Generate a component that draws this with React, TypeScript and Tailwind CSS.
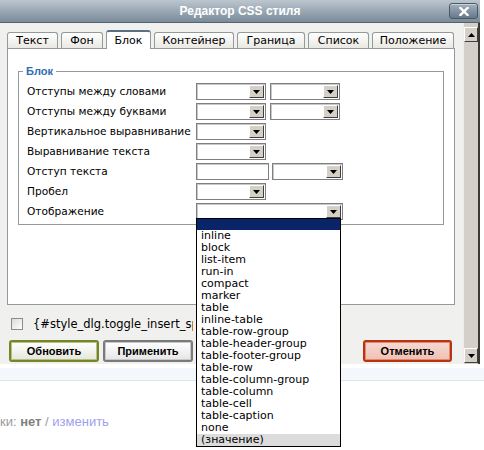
import React from "react";

function DropBtn() {
  return (
    <div className="w-[15px] h-[13px] bg-[#d4d0c8] border border-t-white border-l-white border-b-[#404040] border-r-[#404040] flex items-center justify-center">
      <svg width="7" height="4" viewBox="0 0 7 4"><path d="M0 0h7L3.5 4z" fill="#000" /></svg>
    </div>
  );
}

function Sel({ cls }: { cls: string }) {
  return (
    <div className={cls + " h-[17px] border border-[#7f7f7f] bg-white flex justify-end items-center pr-[1px] shadow-[inset_1px_1px_0_#c8c8c8]"}>
      <DropBtn />
    </div>
  );
}

function Row({ label, children }: { label: string; children?: React.ReactNode }) {
  return (
    <div className="h-[17px] flex items-center">
      <div className="w-[169px] leading-[17px] whitespace-nowrap text-[10.6px]">{label}</div>
      {children}
    </div>
  );
}

const tabs: { t: string; w: string; active?: boolean }[] = [
  { t: "Текст", w: "w-[51px]" },
  { t: "Фон", w: "w-[42px]" },
  { t: "Блок", w: "w-[45px]", active: true },
  { t: "Контейнер", w: "w-[80px]" },
  { t: "Граница", w: "w-[68px]" },
  { t: "Список", w: "w-[61px]" },
  { t: "Положение", w: "w-[82px]" },
];

const items = [
  "inline",
  "block",
  "list-item",
  "run-in",
  "compact",
  "marker",
  "table",
  "inline-table",
  "table-row-group",
  "table-header-group",
  "table-footer-group",
  "table-row",
  "table-column-group",
  "table-column",
  "table-cell",
  "table-caption",
  "none",
];

function Arrow({ up }: { up?: boolean }) {
  return (
    <div className="w-[14px] h-[15px] bg-[#d4d0c8] border border-t-white border-l-white border-b-[#404040] border-r-[#404040] flex items-center justify-center">
      <svg width="7" height="4" viewBox="0 0 7 4">
        <path d={up ? "M0 4h7L3.5 0z" : "M0 0h7L3.5 4z"} fill="#000" />
      </svg>
    </div>
  );
}

export default function App() {
  return (
    <div className="relative w-[484px] h-[450px] overflow-hidden bg-white font-['DejaVu_Sans',sans-serif] text-[11px] text-black">
      {/* dialog */}
      <div className="w-[480px] h-[364px] flex flex-col">
        <div className="h-[23px] flex items-center pl-[31px] bg-linear-to-b from-[#bcc6cf] to-[#7a8b99] border-b border-[#56636e]">
          <div className="flex-1 text-center text-white font-bold text-[12px] font-['Liberation_Sans',sans-serif]">
            Редактор CSS стиля
          </div>
          <div className="w-[29px] h-[16px] mr-[2px] rounded-[3px] border border-[#4b5966] bg-linear-to-b from-[#a4b1bc] to-[#66788a] flex items-center justify-center shadow-[inset_0_1px_0_#c8d2da]">
            <svg width="10" height="9" viewBox="0 0 10 9">
              <path d="M1.5 1l7 7M8.5 1l-7 7" stroke="#fff" strokeWidth="2.4" strokeLinecap="square" />
            </svg>
          </div>
        </div>
        <div className="flex flex-1">
          {/* main */}
          <div className="w-[463px] bg-[#f0f0ee] pl-[7px] pt-[9px] flex flex-col">
            <div className="h-[16px] flex items-end gap-[3px] relative z-10">
              {tabs.map((tb) =>
                tb.active ? (
                  <div
                    key={tb.t}
                    className={tb.w + " h-[19px] -mb-px bg-white border border-[#919b9c] border-b-0 border-t-2 border-t-[#5e6f80] rounded-t-[3px] flex items-center justify-center pt-[1px]"}
                  >
                    {tb.t}
                  </div>
                ) : (
                  <div
                    key={tb.t}
                    className={tb.w + " h-[16px] bg-linear-to-b from-white to-[#e9e8e2] border border-[#919b9c] border-b-0 rounded-t-[3px] flex items-center justify-center pt-[1px]"}
                  >
                    {tb.t}
                  </div>
                )
              )}
            </div>
            <div className="w-[448px] h-[257px] border border-[#919b9c] bg-white">
              <fieldset className="mx-[10px] mt-[15px] border border-[#919b9c] pl-[8px] pt-[5px] pb-[4px]">
                <legend className="ml-[-4px] px-[3px] leading-[14px] font-bold text-[#2e6db4] text-[11px] font-['Liberation_Sans',sans-serif]">
                  Блок
                </legend>
                <div className="flex flex-col gap-[3px]">
                  <Row label="Отступы между словами">
                    <Sel cls="w-[70px]" />
                    <Sel cls="w-[70px] ml-[4px]" />
                  </Row>
                  <Row label="Отступы между буквами">
                    <Sel cls="w-[70px]" />
                    <Sel cls="w-[70px] ml-[4px]" />
                  </Row>
                  <Row label="Вертикальное выравнивание">
                    <Sel cls="w-[70px]" />
                  </Row>
                  <Row label="Выравнивание текста">
                    <Sel cls="w-[70px]" />
                  </Row>
                  <Row label="Отступ текста">
                    <div className="w-[73px] h-[17px] border border-[#7f7f7f] bg-white shadow-[inset_1px_1px_0_#c8c8c8]" />
                    <Sel cls="w-[71px] ml-[3px]" />
                  </Row>
                  <Row label="Пробел">
                    <Sel cls="w-[70px]" />
                  </Row>
                  <Row label="Отображение">
                    <Sel cls="w-[147px]" />
                  </Row>
                </div>
              </fieldset>
            </div>
            <div className="mt-[13px] h-[12px] flex items-center">
              <div className="ml-[4px] w-[12px] h-[12px] border border-[#8c8c8c] bg-linear-to-br from-[#dcdcd6] to-white" />
              <div className="ml-[10px] w-[160px] overflow-hidden text-[11.5px] leading-[14px] whitespace-nowrap">{"{#style_dlg.toggle_insert_span}"}</div>
            </div>
            <div className="mt-[10px] flex mr-[11px]">
              <button className="ml-[2px] w-[90px] h-[22px] rounded-[3px] border-2 border-[#75852a] bg-linear-to-b from-white to-[#e6e6de] shadow-[inset_0_0_0_1px_#b8c080] font-bold text-[11px] font-['Liberation_Sans',sans-serif]">
                Обновить
              </button>
              <button className="ml-[4px] w-[90px] h-[22px] rounded-[3px] border-2 border-[#7a7a7a] bg-linear-to-b from-white to-[#e6e6e6] shadow-[inset_0_0_0_1px_#c8c8c8] font-bold text-[11px] font-['Liberation_Sans',sans-serif]">
                Применить
              </button>
              <button className="ml-auto w-[89px] h-[22px] rounded-[3px] border-2 border-[#b8330f] bg-linear-to-b from-[#f6d9d2] to-[#efc0b5] shadow-[inset_0_0_0_1px_#e08a70] font-bold text-[11px] font-['Liberation_Sans',sans-serif]">
                Отменить
              </button>
            </div>
          </div>
          {/* scrollbar */}
          <div className="w-[17px] bg-[#eeede9] flex">
            <div className="ml-[1px] w-[14px] bg-[#d4d0c8] flex flex-col justify-between pt-[4px] pb-[1px]">
              <Arrow up />
              <Arrow />
            </div>
            <div className="w-[2px] bg-[#3e3834]" />
          </div>
        </div>
      </div>
      {/* page below */}
      <div className="mt-[4px] h-[13px] bg-[#f4f7fc] border-b border-[#dde6ef]" />
      <div className="mt-[33px] leading-[16px] text-[13px] font-['Liberation_Sans',sans-serif] text-[#9a9a9a] whitespace-nowrap">
        ки: <span className="font-bold text-[#7f7f7f]">нет</span> / <span className="text-[#a0a0f0]">изменить</span>
      </div>
      {/* open dropdown list */}
      <div className="absolute left-[196px] top-[218px] w-[145px] border border-black bg-white leading-[12px] text-[11px]">
        <div className="h-[11px] bg-[#0a246a]" />
        {items.map((it) => (
          <div key={it} className="h-[12px] pl-[4px] whitespace-nowrap">
            {it}
          </div>
        ))}
        <div className="h-[12px] pl-[4px] bg-[#dcdcdc] whitespace-nowrap">(значение)</div>
      </div>
    </div>
  );
}
